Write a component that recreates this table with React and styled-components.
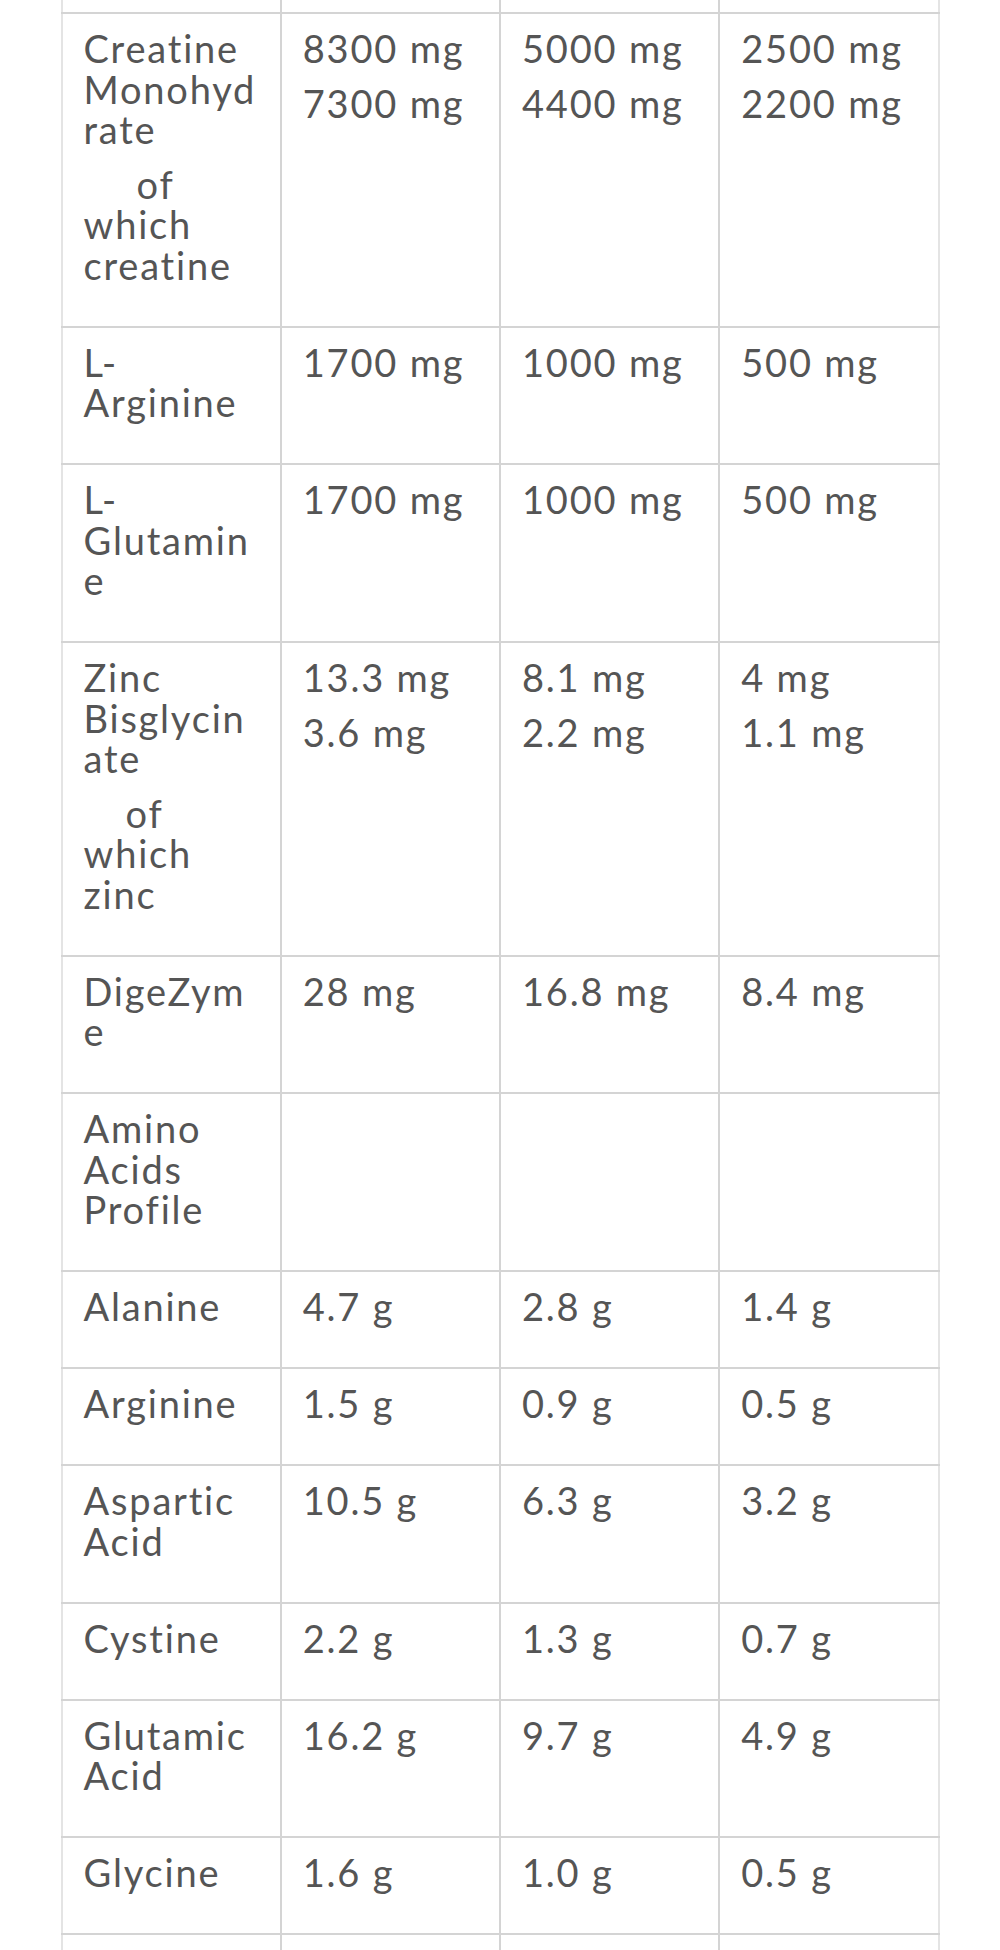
import React from 'react';
import styled, { createGlobalStyle } from 'styled-components';

const GlobalStyle = createGlobalStyle`
  html, body {
    margin: 0;
    padding: 0;
    background: #ffffff;
  }
  body {
    font-family: Lato, "Open Sans", sans-serif;
    color: #555555;
  }
`;

const Wrapper = styled.div`
  width: 879px;
  height: 1950px;
  margin: 0 auto;
  overflow: hidden;
`;

const Table = styled.table`
  width: 100%;
  border-collapse: collapse;
  table-layout: fixed;
`;

const Cell = styled.td`
  vertical-align: top;
  padding: ${(p) => (p.$stub ? '0' : '14px 12px 40.5px 21px')};
  height: ${(p) => (p.$stub ? `${p.$stub}px` : 'auto')};
  border: 2px solid #d4d4d4;
  border-top: ${(p) => (p.$noTop ? 'none' : '2px solid #d4d4d4')};
  font-size: 38px;
  line-height: 40.5px;
  letter-spacing: 1.8px;
  color: #555555;
  white-space: nowrap;

  &:first-child {
    border-left-color: #e4e4e4;
  }
  &:last-child {
    border-right-color: #e4e4e4;
  }
`;

const Line = styled.p`
  margin: 0;
  text-indent: ${(p) => (p.$indent ? `${p.$indent}px` : '0')};

  & + & {
    margin-top: 14px;
  }
`;

// "|" marks where the narrow first column wraps the label
const rows = [
  { label: [['Creatine |Monohyd|rate'], ['of |which |creatine', 53]], values: [['8300 mg', '7300 mg'], ['5000 mg', '4400 mg'], ['2500 mg', '2200 mg']] },
  { label: [['L-|Arginine']], values: [['1700 mg'], ['1000 mg'], ['500 mg']] },
  { label: [['L-|Glutamin|e']], values: [['1700 mg'], ['1000 mg'], ['500 mg']] },
  { label: [['Zinc |Bisglycin|ate'], ['of |which |zinc', 42]], values: [['13.3 mg', '3.6 mg'], ['8.1 mg', '2.2 mg'], ['4 mg', '1.1 mg']] },
  { label: [['DigeZym|e']], values: [['28 mg'], ['16.8 mg'], ['8.4 mg']] },
  { label: [['Amino |Acids |Profile']], values: [[], [], []] },
  { label: [['Alanine']], values: [['4.7 g'], ['2.8 g'], ['1.4 g']] },
  { label: [['Arginine']], values: [['1.5 g'], ['0.9 g'], ['0.5 g']] },
  { label: [['Aspartic |Acid']], values: [['10.5 g'], ['6.3 g'], ['3.2 g']] },
  { label: [['Cystine']], values: [['2.2 g'], ['1.3 g'], ['0.7 g']] },
  { label: [['Glutamic |Acid']], values: [['16.2 g'], ['9.7 g'], ['4.9 g']] },
  { label: [['Glycine']], values: [['1.6 g'], ['1.0 g'], ['0.5 g']] },
];

const Wrapped = ({ text }) =>
  text.split('|').map((part, i) => (
    <React.Fragment key={i}>
      {i > 0 && <br />}
      {part}
    </React.Fragment>
  ));

const StubRow = ({ height, noTop }) => (
  <tr>
    {[0, 1, 2, 3].map((i) => (
      <Cell key={i} $stub={height} $noTop={noTop} />
    ))}
  </tr>
);

const App = () => {
  return (
    <>
      <GlobalStyle />
      <Wrapper>
        <Table>
          <tbody>
            <StubRow height={12} noTop />
            {rows.map((row, r) => (
              <tr key={r}>
                <Cell>
                  {row.label.map(([text, indent], i) => (
                    <Line key={i} $indent={indent}>
                      <Wrapped text={text} />
                    </Line>
                  ))}
                </Cell>
                {row.values.map((vals, c) => (
                  <Cell key={c}>
                    {vals.map((v, i) => (
                      <Line key={i}>{v}</Line>
                    ))}
                  </Cell>
                ))}
              </tr>
            ))}
            <StubRow height={120} />
          </tbody>
        </Table>
      </Wrapper>
    </>
  );
};

export default App;
